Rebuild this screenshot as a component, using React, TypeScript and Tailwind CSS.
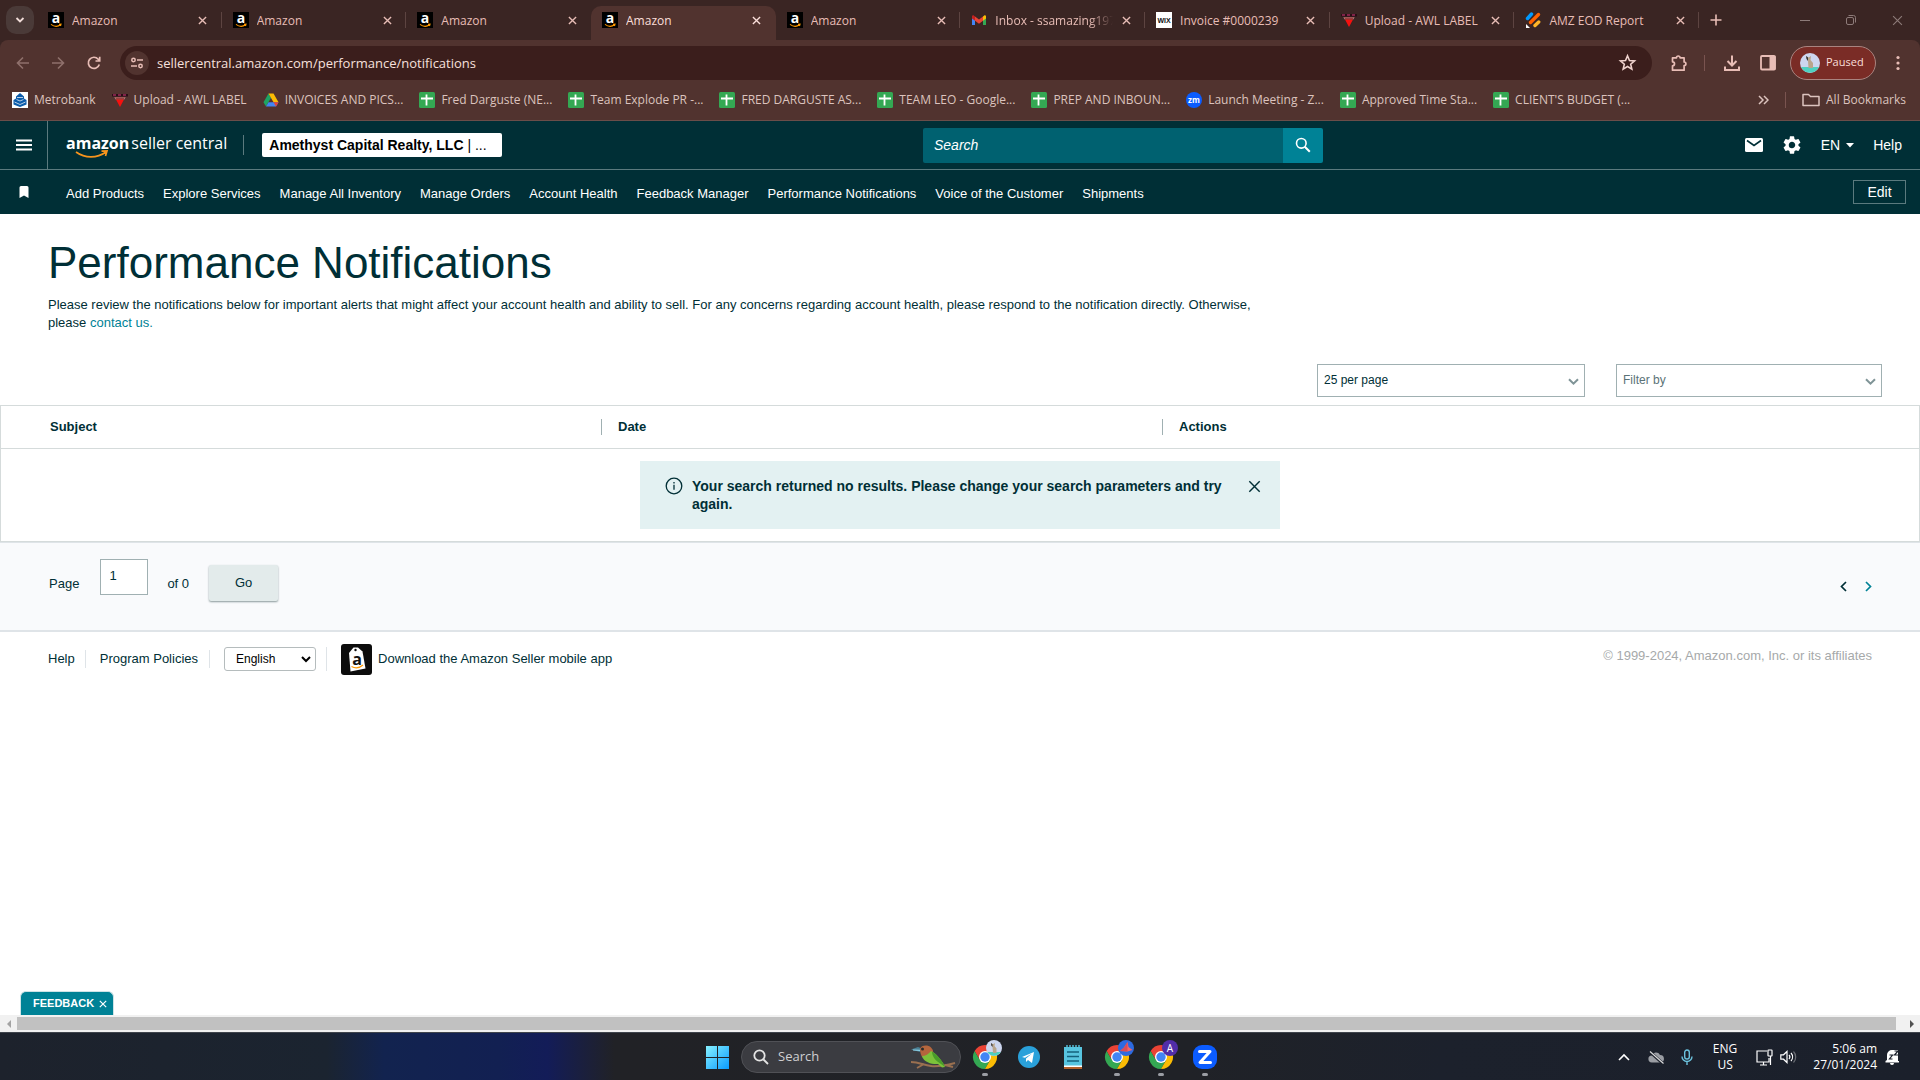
import React, { type ReactNode } from "react";

const CHROME_FONT = "font-['Open_Sans',sans-serif]";

type Kind = "amazon" | "gmail" | "wix" | "awl" | "eod" | "metro" | "drive" | "sheet" | "zoom";

function Favicon({ kind }: { kind: Kind }) {
  const cls = "size-4 shrink-0";
  switch (kind) {
    case "amazon":
      return (
        <svg viewBox="0 0 16 16" className={cls} aria-hidden="true">
          <rect width="16" height="16" fill="#000" />
          <text x="8" y="10.5" textAnchor="middle" fontSize="14" fontWeight="700" fontFamily="Open Sans, sans-serif" fill="#fff">a</text>
          <path d="M3 12.4c3 2.3 7 2.3 9.6.4M11 12.3l2-.1-.5 1.8" fill="none" stroke="#f90" strokeWidth="1.1" />
        </svg>
      );
    case "gmail":
      return (
        <svg viewBox="0 0 16 16" className={cls} aria-hidden="true">
          <path d="M1 4v9h3V6.500z" fill="#4285f4" />
          <path d="M15 4v9h-3V6.500z" fill="#34a853" />
          <path d="M12 4.500L13.500 3.200Q15 3 15 4.500V6.500L12 8.700z" fill="#fbbc04" />
          <path d="M1 6.500V4.500Q1 3 2.500 3.200L4 4.500V8.700z" fill="#c5221f" />
          <path d="M4 4.500L8 7.500l4-3v4.200l-4 3-4-3z" fill="#ea4335" />
        </svg>
      );
    case "wix":
      return (
        <svg viewBox="0 0 16 16" className={cls} aria-hidden="true">
          <rect width="16" height="16" fill="#fff" />
          <text x="8" y="10.500" textAnchor="middle" fontSize="7" fontWeight="700" fontFamily="Liberation Sans, sans-serif" fill="#111">WIX</text>
        </svg>
      );
    case "awl":
      return (
        <svg viewBox="0 0 16 16" className={cls} aria-hidden="true">
          <rect x="0" y="2" width="16" height="2.500" fill="#2a0d16" />
          <path d="M1 3h3M6 3h3M11 3h3" stroke="#d63a7a" strokeWidth="1" />
          <path d="M2.500 5.300h11l-1 2h-9z" fill="#e8b9b9" />
          <path d="M3 5.500h10l-.7 1.200H3.700z" fill="#7a1a1a" />
          <path d="M4 7.500h8L8 15z" fill="#f5110f" />
        </svg>
      );
    case "eod":
      return (
        <svg viewBox="0 0 16 16" className={cls} aria-hidden="true">
          <g strokeLinecap="round" strokeWidth="3.400">
            <path d="M2.500 6.500l4-4.500" stroke="#0099ff" />
            <path d="M5.500 10.500l8-8" stroke="#ff6100" />
            <path d="M10 13.500l3.700-3.500" stroke="#ffb629" />
          </g>
          <path d="M1 12v4h4z" fill="#fff" />
        </svg>
      );
    case "metro":
      return (
        <svg viewBox="0 0 16 16" className={cls} aria-hidden="true">
          <rect width="16" height="16" fill="#fff" />
          <path d="M8 1l4 3.500v2L14.500 8v4.500L8 15l-6.500-2.500V8L4 6.500v-2z" fill="#0b5cab" />
          <path d="M5 5.500h6M4.500 7.500L8 9l3.500-1.500M2.500 10L8 12.500l5.500-2.500" fill="none" stroke="#fff" strokeWidth=".7" />
        </svg>
      );
    case "drive":
      return (
        <svg viewBox="0 0 16 16" className={cls} aria-hidden="true">
          <path d="M5.500 1.500L8 5.800 3 14.500.5 10.200z" fill="#1ea362" />
          <path d="M5.500 1.500h5l5 8.700h-5z" fill="#fbbc04" />
          <path d="M5.500 10.200h10L13 14.500H3z" fill="#4285f4" />
          <path d="M15.500 10.200L13 14.500l-2.500-4.300z" fill="#ea4335" />
        </svg>
      );
    case "sheet":
      return (
        <svg viewBox="0 0 16 16" className={cls} aria-hidden="true">
          <rect width="16" height="16" rx="1.500" fill="#34a853" />
          <path d="M2 6.500h12M7.500 2.500v11" stroke="#fff" strokeWidth="1.800" />
        </svg>
      );
    case "zoom":
      return (
        <svg viewBox="0 0 16 16" className={cls} aria-hidden="true">
          <circle cx="8" cy="8" r="8" fill="#0b5cff" />
          <text x="8" y="10.500" textAnchor="middle" fontSize="8" fontWeight="700" fontFamily="Open Sans, sans-serif" fill="#fff">zm</text>
        </svg>
      );
  }
}

const tabs: { kind: Kind; title: string; active?: boolean; noLine?: boolean }[] = [
  { kind: "amazon", title: "Amazon" },
  { kind: "amazon", title: "Amazon" },
  { kind: "amazon", title: "Amazon", noLine: true },
  { kind: "amazon", title: "Amazon", active: true, noLine: true },
  { kind: "amazon", title: "Amazon" },
  { kind: "gmail", title: "Inbox - ssamazing197" },
  { kind: "wix", title: "Invoice #0000239" },
  { kind: "awl", title: "Upload - AWL LABEL" },
  { kind: "eod", title: "AMZ EOD Report" },
];

const bookmarks: { kind: Kind; title: string }[] = [
  { kind: "metro", title: "Metrobank" },
  { kind: "awl", title: "Upload - AWL LABEL" },
  { kind: "drive", title: "INVOICES AND PICS..." },
  { kind: "sheet", title: "Fred Darguste (NE..." },
  { kind: "sheet", title: "Team Explode PR -..." },
  { kind: "sheet", title: "FRED DARGUSTE AS..." },
  { kind: "sheet", title: "TEAM LEO - Google..." },
  { kind: "sheet", title: "PREP AND INBOUN..." },
  { kind: "zoom", title: "Launch Meeting - Z..." },
  { kind: "sheet", title: "Approved Time Sta..." },
  { kind: "sheet", title: "CLIENT'S BUDGET (..." },
];

function Cross({ className, width = 1.5 }: { className: string; width?: number }) {
  return (
    <svg viewBox="0 0 10 10" className={className} fill="none" stroke="currentColor" strokeWidth={width} aria-hidden="true">
      <path d="M1 1l8 8M9 1l-8 8" />
    </svg>
  );
}

function TabStrip() {
  return (
    <div className="flex h-10 items-stretch bg-[#3a2523] text-[#e8bdb6]">
      <div className="flex w-[37px] shrink-0 items-center pl-[6px]">
        <button type="button" aria-label="Search tabs" className="flex h-7 w-7 items-center justify-center rounded-[10px] bg-[#4a3a38] text-[#f0dcd8]">
          <svg viewBox="0 0 10 10" className="size-[10px]" fill="none" stroke="currentColor" strokeWidth="1.800" aria-hidden="true">
            <path d="M1.500 3L5 6.500 8.500 3" />
          </svg>
        </button>
      </div>
      <div role="tablist" className="flex min-w-0 flex-1">
        {tabs.map((t, i) => (
          <div
            key={i}
            role="tab"
            aria-selected={!!t.active}
            className={
              "relative flex min-w-0 flex-1 items-center pl-[11px] pr-[14px] " +
              (t.active ? "mt-[6px] rounded-t-[10px] bg-[#51332f] pb-[6px] text-[#fbdfda]" : "")
            }
          >
            <Favicon kind={t.kind} />
            <span
              className={
                "ml-2 min-w-0 flex-1 overflow-hidden whitespace-nowrap pt-px text-[12px] leading-4 " +
                (t.kind === "gmail" ? "[mask-image:linear-gradient(90deg,#000_80%,transparent)]" : "")
              }
            >
              {t.title}
            </span>
            <button type="button" aria-label="Close tab" className="ml-2 flex size-[10px] shrink-0 items-center justify-center">
              <Cross className="size-[9px]" />
            </button>
            {!t.noLine && <span className="absolute right-0 top-3 h-4 w-px bg-[#5d4441]" />}
          </div>
        ))}
      </div>
      <div className="flex w-[221px] shrink-0 items-center pl-[11px]">
        <button type="button" aria-label="New tab" className="flex size-3 items-center justify-center">
          <svg viewBox="0 0 12 12" className="size-3" stroke="currentColor" strokeWidth="1.600" aria-hidden="true">
            <path d="M6 .5v11M.5 6h11" />
          </svg>
        </button>
        <div className="ml-auto flex items-center gap-9 pr-[17px] text-[#8d7b79]">
          <button type="button" aria-label="Minimize" className="flex h-3 w-[10px] items-center">
            <span className="h-px w-full bg-current" />
          </button>
          <button type="button" aria-label="Restore">
            <svg viewBox="0 0 10 10" className="size-[10px]" fill="none" stroke="currentColor" aria-hidden="true">
              <rect x=".5" y="2.500" width="7" height="7" rx="1.500" />
              <path d="M2.500.5h5a2 2 0 0 1 2 2v5" />
            </svg>
          </button>
          <button type="button" aria-label="Close">
            <Cross className="size-[11px]" width={1} />
          </button>
        </div>
      </div>
    </div>
  );
}

function Toolbar() {
  return (
    <div className="bg-[#3a2523]">
      <div className="flex h-[45px] items-center rounded-t-lg bg-[#51332f] pl-4 text-[#e8bdb6]">
        <button type="button" aria-label="Back" className="text-[#8f706c]">
          <svg viewBox="0 0 14 14" className="size-[14px]" fill="none" stroke="currentColor" strokeWidth="1.600" aria-hidden="true">
            <path d="M13 7H1.500M7 1.500L1.500 7 7 12.500" />
          </svg>
        </button>
        <button type="button" aria-label="Forward" className="ml-[21px] text-[#8f706c]">
          <svg viewBox="0 0 14 14" className="size-[14px]" fill="none" stroke="currentColor" strokeWidth="1.600" aria-hidden="true">
            <path d="M1 7h11.500M7 1.500L12.500 7 7 12.500" />
          </svg>
        </button>
        <button type="button" aria-label="Reload" className="ml-[22px]">
          <svg viewBox="0 0 14 14" className="size-[14px]" fill="none" stroke="currentColor" strokeWidth="1.700" aria-hidden="true">
            <path d="M12.300 8.500A5.600 5.600 0 1 1 11.200 3.200L12.500 4.700M12.700 .8V5H8.500" />
          </svg>
        </button>
        <div className="ml-[19px] flex h-[34px] min-w-0 flex-1 items-center rounded-full bg-[#3b1e1c] pl-[5px] pr-[15px]">
          <button type="button" aria-label="Site information" className="flex size-6 shrink-0 items-center justify-center rounded-full bg-[#51332f]">
            <svg viewBox="0 0 14 14" className="size-[14px]" fill="none" stroke="currentColor" strokeWidth="1.500" aria-hidden="true">
              <circle cx="3.500" cy="4" r="1.700" />
              <path d="M7 4h6M1 10h6" />
              <circle cx="10.500" cy="10" r="1.700" />
            </svg>
          </button>
          <label htmlFor="url" className="sr-only">Address</label>
          <input
            id="url"
            type="text"
            defaultValue="sellercentral.amazon.com/performance/notifications"
            className="ml-2 min-w-0 flex-1 bg-transparent text-[13px] leading-5 text-[#f7e0dc] outline-none"
          />
          <button type="button" aria-label="Bookmark this tab" className="text-[#f0d3ce]">
            <svg viewBox="0 0 24 24" className="size-[19px]" fill="none" stroke="currentColor" strokeWidth="2" aria-hidden="true">
              <path d="M12 3.500l2.500 5.900 6.400.5-4.900 4.200 1.500 6.300L12 17l-5.500 3.400L8 14.100 3.100 9.900l6.400-.5z" />
            </svg>
          </button>
        </div>
        <div className="ml-[18px] flex shrink-0 items-center pr-5">
          <button type="button" aria-label="Extensions">
            <svg viewBox="0 0 18 18" className="size-[18px]" fill="none" stroke="currentColor" strokeWidth="1.700" strokeLinejoin="round" aria-hidden="true">
              <path d="M2.500 3.800h4a1.800 1.800 0 0 1 3.600 0h4v4.200a1.800 1.800 0 0 1 0 3.600v4.600H2.500v-4.400a2 2 0 0 0 0-4z" />
            </svg>
          </button>
          <span className="ml-4 h-4 w-px bg-[#7a5450]" />
          <button type="button" aria-label="Downloads" className="ml-[18px]">
            <svg viewBox="0 0 18 18" className="size-[18px]" fill="none" stroke="currentColor" strokeWidth="2" aria-hidden="true">
              <path d="M9 1.500v9.500M4.500 7L9 11.500 13.500 7M2 12.500v3.500h14v-3.500" />
            </svg>
          </button>
          <button type="button" aria-label="Side panel" className="ml-[18px]">
            <svg viewBox="0 0 18 18" className="size-[18px]" aria-hidden="true">
              <rect x="2" y="2" width="14" height="13.500" rx="1" fill="none" stroke="currentColor" strokeWidth="1.800" />
              <rect x="10.500" y="2" width="6" height="13.500" fill="currentColor" />
            </svg>
          </button>
          <button type="button" className="ml-[13px] flex h-[34px] w-[86px] items-center rounded-full border border-[#a98480] bg-[#7a2c26] pl-[9px] text-[11px] text-[#fbdfda]">
            <svg viewBox="0 0 20 20" className="size-5" aria-hidden="true">
              <circle cx="10" cy="10" r="10" fill="#cdd6ef" />
              <path d="M1 14h18a10 10 0 0 1-18 0z" fill="#4fd0c0" />
              <path d="M6 3l2.500 1.500L11 3l-.5 4 2.500 3v5H8.500L8 8z" fill="#b9a58b" />
              <path d="M6 3l2 1.500V8L6.500 6z" fill="#333" />
            </svg>
            <span className="ml-[6px]">Paused</span>
          </button>
          <button type="button" aria-label="Menu" className="ml-5">
            <svg viewBox="0 0 4 16" className="h-4 w-1" fill="currentColor" aria-hidden="true">
              <circle cx="2" cy="2.500" r="1.600" />
              <circle cx="2" cy="8" r="1.600" />
              <circle cx="2" cy="13.500" r="1.600" />
            </svg>
          </button>
        </div>
      </div>
      <div className="flex h-9 items-center border-b border-[#6a4d49] bg-[#51332f] pb-[5px] pl-3 pr-[14px] text-[12px] text-[#dcc3be]">
        <nav aria-label="Bookmarks" className="flex min-w-0 items-center gap-4">
          {bookmarks.map((b) => (
            <a key={b.title} href="#" className="flex items-center gap-[6px] whitespace-nowrap">
              <Favicon kind={b.kind} />
              {b.title}
            </a>
          ))}
        </nav>
        <div className="ml-auto flex shrink-0 items-center">
          <button type="button" aria-label="More bookmarks">
            <svg viewBox="0 0 11 10" className="h-[10px] w-[11px]" fill="none" stroke="currentColor" strokeWidth="1.500" aria-hidden="true">
              <path d="M1 1l4 4-4 4M6 1l4 4-4 4" />
            </svg>
          </button>
          <span className="ml-4 h-4 w-px bg-[#7a5450]" />
          <a href="#" className="ml-4 flex items-center gap-[6px] whitespace-nowrap">
            <svg viewBox="0 0 18 14" className="h-[14px] w-[18px]" fill="none" stroke="currentColor" strokeWidth="1.500" strokeLinejoin="round" aria-hidden="true">
              <path d="M1 12.500v-11h5.500l2 2H17v9z" />
            </svg>
            All Bookmarks
          </a>
        </div>
      </div>
    </div>
  );
}

const navItems = [
  "Add Products",
  "Explore Services",
  "Manage All Inventory",
  "Manage Orders",
  "Account Health",
  "Feedback Manager",
  "Performance Notifications",
  "Voice of the Customer",
  "Shipments",
];

function SiteHeader() {
  return (
    <header className="bg-[#002f36] text-white">
      <div className="grid h-[49px] grid-cols-[923fr_400px_597fr] items-center border-b border-[#5b7a7e]">
        <div className="flex h-full items-center">
          <button type="button" aria-label="Open menu" className="flex h-full w-12 items-center justify-center border-r border-[#5b7a7e]">
            <svg viewBox="0 0 16 12" className="h-3 w-4" stroke="currentColor" strokeWidth="2" aria-hidden="true">
              <path d="M0 1.500h16M0 6h16M0 10.500h16" />
            </svg>
          </button>
          <a href="#" aria-label="amazon seller central" className="relative ml-[18px] flex h-7 items-start gap-[2px] whitespace-nowrap pt-[2px] font-['Open_Sans',sans-serif] text-[16px] leading-5">
            <span className="font-bold">amazon</span>
            <span>seller central</span>
            <svg viewBox="0 0 34 9" className="absolute left-[9px] top-[19px] h-[9px] w-[34px]" fill="none" stroke="#f7941d" strokeWidth="1.700" aria-hidden="true">
              <path d="M1 2c9 6.500 21 6.500 30 0M26.500 1.200l5.500-.2-1.500 5" />
            </svg>
          </a>
          <span className="ml-4 h-5 w-px bg-[#5b7a7e]" />
          <button type="button" className="ml-[18px] h-6 w-60 truncate rounded-[2px] bg-white pl-[7px] text-left text-[14px] leading-6 text-black">
            <b>Amethyst Capital Realty, LLC</b> | ...
          </button>
        </div>
        <form className="flex h-[35px]" onSubmit={(e) => e.preventDefault()}>
          <label htmlFor="site-search" className="sr-only">Search</label>
          <input
            id="site-search"
            type="text"
            placeholder="Search"
            className="min-w-0 flex-1 rounded-l-[2px] bg-[#006170] px-[11px] text-[14px] italic text-white outline-none placeholder:text-white"
          />
          <button type="submit" aria-label="Search" className="flex w-10 items-center justify-center rounded-r-[2px] bg-[#008296]">
            <svg viewBox="0 0 16 16" className="size-4" fill="none" stroke="currentColor" strokeWidth="1.600" aria-hidden="true">
              <circle cx="6.300" cy="6.300" r="4.800" />
              <path d="M9.800 9.800l5 5" strokeWidth="2" />
            </svg>
          </button>
        </form>
        <div className="flex items-center justify-end pr-[18px] text-[14px]">
          <button type="button" aria-label="Mail">
            <svg viewBox="0 0 18 14" className="h-[14px] w-[18px]" aria-hidden="true">
              <rect width="18" height="14" rx="1.500" fill="#fff" />
              <path d="M2 2.500l7 5 7-5" fill="none" stroke="#002f36" strokeWidth="1.600" />
            </svg>
          </button>
          <button type="button" aria-label="Settings" className="ml-5">
            <svg viewBox="2 2 20 20" className="size-[18px]" fill="#fff" aria-hidden="true">
              <path d="M19.140 12.940c.04-.3.060-.610.060-.940 0-.32-.020-.640-.070-.940l2.030-1.580a.49.49 0 0 0 .12-.61l-1.920-3.320a.488.488 0 0 0-.59-.22l-2.390.96c-.5-.38-1.030-.7-1.620-.940l-.36-2.540a.484.484 0 0 0-.48-.41h-3.840c-.24 0-.43.17-.47.41l-.36 2.540c-.59.24-1.130.57-1.620.94l-2.390-.96c-.22-.08-.47 0-.59.22L2.740 8.870c-.12.21-.08.47.12.61l2.030 1.580c-.05.3-.09.63-.09.940s.02.640.07.940l-2.030 1.580a.49.49 0 0 0-.12.61l1.920 3.320c.12.22.37.29.59.22l2.390-.96c.5.38 1.030.7 1.620.94l.36 2.540c.05.24.24.41.48.41h3.840c.24 0 .44-.17.47-.41l.36-2.540c.59-.24 1.130-.56 1.620-.94l2.390.96c.22.08.47 0 .59-.22l1.920-3.320c.12-.22.07-.47-.12-.61l-2.010-1.580zM12 15.600A3.610 3.610 0 0 1 8.400 12c0-1.980 1.620-3.600 3.600-3.600s3.600 1.620 3.600 3.600-1.620 3.600-3.600 3.600z" />
            </svg>
          </button>
          <button type="button" className="ml-5 flex items-center gap-[6px]">
            EN
            <svg viewBox="0 0 8 5" className="h-[5px] w-2" fill="currentColor" aria-hidden="true">
              <path d="M0 0h8L4 4.500z" />
            </svg>
          </button>
          <a href="#" className="ml-[19px]">Help</a>
        </div>
      </div>
      <div className="flex h-11 items-center pr-[14px] text-[13px]">
        <button type="button" aria-label="Bookmarked pages" className="flex w-12 justify-center">
          <svg viewBox="0 0 10 12" className="h-3 w-[10px]" fill="currentColor" aria-hidden="true">
            <path d="M.5 1.500Q.5 0 2 0h6q1.500 0 1.500 1.500V12L5 9.500.5 12z" />
          </svg>
        </button>
        <nav aria-label="Favorites" className="ml-[18px] flex gap-[19px] whitespace-nowrap pt-[3px]">
          {navItems.map((n) => (
            <a key={n} href="#">{n}</a>
          ))}
        </nav>
        <button type="button" className="ml-auto h-6 w-[53px] border border-[#5b7a7e] text-[14px] leading-5">Edit</button>
      </div>
    </header>
  );
}

function FilterSelect({ id, label, width, tone, children }: { id: string; label: string; width: string; tone: string; children: ReactNode }) {
  return (
    <div className={"relative " + width}>
      <label htmlFor={id} className="sr-only">{label}</label>
      <select id={id} className={"h-[33px] w-full appearance-none border border-[#a0b0b2] bg-white pb-[2px] pl-[6px] text-[12px] outline-none " + tone}>
        {children}
      </select>
      <svg viewBox="0 0 11 8" className="pointer-events-none absolute right-[6px] top-[14px] h-2 w-[11px]" fill="none" stroke="#7f9497" strokeWidth="2" aria-hidden="true">
        <path d="M1 1.200l4.500 4.500L10 1.200" />
      </svg>
    </div>
  );
}

function Content() {
  return (
    <main className="flex flex-1 flex-col bg-white text-[13px] text-[#002f36]">
      <div className="px-12 pt-6">
        <h1 className="text-[44px] leading-[50px]">Performance Notifications</h1>
        <p className="mt-2 max-w-[1220px] leading-[18px]">
          Please review the notifications below for important alerts that might affect your account health and ability to sell. For any concerns regarding account health, please respond to the notification directly. Otherwise, please{" "}
          <a href="#" className="text-[#008296]">contact us.</a>
        </p>
      </div>
      <div className="mt-8 flex justify-end gap-[31px] pr-[38px]">
        <FilterSelect id="per-page" label="Results per page" width="w-[268px]" tone="text-[#002f36]">
          <option>25 per page</option>
        </FilterSelect>
        <FilterSelect id="filter-by" label="Filter by" width="w-[266px]" tone="text-[#5b7377]">
          <option>Filter by</option>
        </FilterSelect>
      </div>
      <div className="mt-2 border border-[#d5dbdb]">
        <table className="w-full table-fixed border-collapse text-left">
          <thead>
            <tr className="h-[42px] border-b border-[#d5dbdb]">
              <th scope="col" className="w-[600px] font-bold">
                <span className="block pl-[49px] leading-4">Subject</span>
              </th>
              <th scope="col" className="w-[561px] font-bold">
                <span className="block border-l border-[#a0b0b2] pl-4 leading-4">Date</span>
              </th>
              <th scope="col" className="font-bold">
                <span className="block border-l border-[#a0b0b2] pl-4 leading-4">Actions</span>
              </th>
            </tr>
          </thead>
          <tbody>
            <tr>
              <td colSpan={3} className="py-3">
                <div role="status" className="mx-auto flex min-h-[68px] w-[640px] items-start bg-[#e3f1f2] py-4 pl-[25px] pr-[19px] text-[14px] font-bold leading-[18px]">
                  <svg viewBox="0 0 18 18" className="size-[18px] shrink-0" fill="none" stroke="currentColor" strokeWidth="1.300" aria-hidden="true">
                    <circle cx="9" cy="9" r="7.800" />
                    <path d="M9 7.800v5M9 5v1.500" />
                  </svg>
                  <p className="ml-[9px] flex-1">Your search returned no results. Please change your search parameters and try again.</p>
                  <button type="button" aria-label="Dismiss" className="ml-3 mt-[3px]">
                    <Cross className="size-[13px]" width={1.1} />
                  </button>
                </div>
              </td>
            </tr>
          </tbody>
        </table>
      </div>
      <div className="flex h-[90px] items-start border-b-2 border-t border-[#dfe4e8] bg-[#f9fafc] pl-[49px] pr-12">
        <label htmlFor="page-number" className="pt-[31px]">Page</label>
        <input id="page-number" type="text" defaultValue="1" className="ml-[21px] mt-4 h-9 w-12 border border-[#a0b0b2] bg-white pb-[2px] pl-2 outline-none" />
        <span className="ml-[19px] pt-[31px]">of 0</span>
        <button type="button" className="ml-5 mt-[22px] h-9 w-[69px] rounded-[2px] bg-[#e3ebeb] shadow-[0_1px_2px_#8a999b]">Go</button>
        <div className="ml-auto flex gap-[18px] pt-[38px]">
          <button type="button" aria-label="Previous page">
            <svg viewBox="0 0 7 11" className="h-[11px] w-[7px]" fill="none" stroke="#002f36" strokeWidth="1.700" aria-hidden="true">
              <path d="M6 1L1.500 5.500 6 10" />
            </svg>
          </button>
          <button type="button" aria-label="Next page">
            <svg viewBox="0 0 7 11" className="h-[11px] w-[7px]" fill="none" stroke="#008296" strokeWidth="1.700" aria-hidden="true">
              <path d="M1 1l4.500 4.500L1 10" />
            </svg>
          </button>
        </div>
      </div>
      <footer className="flex items-center pl-12 pr-12 pt-3">
        <a href="#">Help</a>
        <span className="ml-[10px] h-[18px] w-px bg-[#dfe4e8]" />
        <a href="#" className="ml-[14px]">Program Policies</a>
        <span className="ml-[11px] h-[18px] w-px bg-[#dfe4e8]" />
        <div className="relative ml-[14px]">
          <label htmlFor="language" className="sr-only">Language</label>
          <select id="language" className="h-6 w-[92px] appearance-none rounded-[3px] border border-[#b5bcbd] bg-white pl-[11px] text-[12px] text-black outline-none">
            <option>English</option>
          </select>
          <svg viewBox="0 0 10 7" className="pointer-events-none absolute right-[5px] top-[9px] h-[7px] w-[10px]" fill="none" stroke="#000" strokeWidth="2" aria-hidden="true">
            <path d="M1 1l4 4 4-4" />
          </svg>
        </div>
        <span className="ml-[10px] h-6 w-px bg-[#dfe4e8]" />
        <a href="#" className="ml-[14px] flex items-center gap-[6px]">
          <svg viewBox="0 0 31 31" className="size-[31px]" aria-hidden="true">
            <rect width="31" height="31" rx="3" fill="#0c0c0c" />
            <path d="M8 9l4.500-5.500h4.500L21.500 7.500 24.500 24.500 9.500 27.500z" fill="#fff" />
            <circle cx="14.500" cy="6" r="1.200" fill="#0c0c0c" />
            <text x="16" y="20.500" textAnchor="middle" fontSize="16" fontWeight="700" fontFamily="Open Sans, sans-serif" fill="#111">a</text>
            <path d="M10.500 22.500c4 2.200 8 1.500 11.500-1.500" fill="none" stroke="#f90" strokeWidth="1.300" />
          </svg>
          Download the Amazon Seller mobile app
        </a>
        <span className="ml-auto pb-[6px] text-[#a6a9aa]">© 1999-2024, Amazon.com, Inc. or its affiliates</span>
      </footer>
      <div className="mt-auto pl-[20px]">
        <button type="button" className="flex h-6 w-[94px] items-center gap-[5px] rounded-t-[6px] border border-b-0 border-[#cfe3e6] bg-[#008296] pl-3 text-[11px] font-bold text-white">
          FEEDBACK
          <Cross className="size-2" />
        </button>
      </div>
    </main>
  );
}

function ScrollBar() {
  return (
    <div className="flex h-[17px] items-center bg-[#f1f1f1]">
      <button type="button" aria-label="Scroll left" className="flex w-[17px] justify-center">
        <svg viewBox="0 0 4 8" className="h-2 w-1" fill="#a3a3a3" aria-hidden="true"><path d="M4 0v8L0 4z" /></svg>
      </button>
      <div className="h-[13px] flex-1 bg-[#c1c1c1]" />
      <button type="button" aria-label="Scroll right" className="flex w-6 justify-center pl-[7px]">
        <svg viewBox="0 0 4 8" className="h-2 w-1" fill="#505050" aria-hidden="true"><path d="M0 0v8l4-4z" /></svg>
      </button>
    </div>
  );
}

function ChromeIcon({ badge }: { badge: "photo" | "origami" | "letter" }) {
  return (
    <svg viewBox="0 0 34 34" className="size-[34px] shrink-0" aria-hidden="true">
      <g transform="translate(5 5)">
        <path d="M12 12V6H22.400A12 12 0 0 0 1.600 6L6.800 15z" fill="#ea4335" />
        <path d="M12 12L6.800 15 1.600 6A12 12 0 0 0 12 24l5.200-9z" fill="#34a853" />
        <path d="M12 12l5.200 3L12 24A12 12 0 0 0 22.400 6H12z" fill="#fbbc04" />
        <circle cx="12" cy="12" r="6" fill="#fff" />
        <circle cx="12" cy="12" r="4.700" fill="#4285f4" />
      </g>
      <g transform="translate(2 0)">
        {badge === "photo" && (
          <g>
            <circle cx="24" cy="8" r="8" fill="#cdd6ef" />
            <path d="M17.200 12h13.600a8 8 0 0 1-13.600 0z" fill="#4fd0c0" />
            <path d="M21 3l2 1.200L25 3l-.5 3 2 2.500V13h-3.500l-.5-6z" fill="#b9a58b" />
            <path d="M21 3l1.500 1.200V7l-1.200-1.500z" fill="#333" />
          </g>
        )}
        {badge === "origami" && (
          <g>
            <circle cx="24" cy="8" r="8" fill="#2d6ae0" />
            <path d="M25.500 2l1 5 4 3-5 1.500L18 11l4-3.500z" fill="#f0676b" />
            <path d="M25.500 2v9.500L18 11l4-3.500z" fill="#d94c58" />
          </g>
        )}
        {badge === "letter" && (
          <g>
            <circle cx="24" cy="8" r="8" fill="#512da8" />
            <text x="24" y="11.500" textAnchor="middle" fontSize="10" fontFamily="Open Sans, sans-serif" fill="#fff">A</text>
          </g>
        )}
      </g>
    </svg>
  );
}

function TaskSlot({ label, running, children }: { label: string; running?: boolean; children: ReactNode }) {
  return (
    <button type="button" aria-label={label} className="relative flex h-12 w-11 items-center justify-center">
      {children}
      {running && <span className="absolute bottom-[5px] h-[3px] w-[6px] rounded-full bg-[#9b9ea4]" />}
    </button>
  );
}

function Taskbar() {
  return (
    <div className="grid h-12 grid-cols-[1fr_536px_1fr] items-center border-t border-[#3f444c] bg-[linear-gradient(90deg,#1d222c_0%,#1b2430_17%,#12234f_20%,#122052_26%,#131c58_28.500%,#212226_32%,#202227_62%,#1c212c_75%,#1b202b_100%)] text-white">
      <span />
      <div className="flex items-center pl-[3px]">
        <TaskSlot label="Start">
          <svg viewBox="0 0 23 23" className="size-[23px]" aria-hidden="true">
            <defs>
              <linearGradient id="win" x1="0" y1="0" x2="1" y2="1">
                <stop offset="0" stopColor="#86f1ff" />
                <stop offset="1" stopColor="#0a9bff" />
              </linearGradient>
            </defs>
            <path d="M0 0h11v11H0zM12 0h11v11H12zM0 12h11v11H0zM12 12h11v11H12z" fill="url(#win)" />
          </svg>
        </TaskSlot>
        <label className="mx-[2px] flex h-8 w-[220px] items-center rounded-full border border-[#505156] bg-[#3b3c41] pl-[11px] pr-1">
          <svg viewBox="0 0 16 16" className="size-4 shrink-0" fill="none" stroke="#e4e4e4" strokeWidth="1.800" aria-hidden="true">
            <circle cx="6.500" cy="6.500" r="5.200" />
            <path d="M10.500 10.500l4.500 4.500" />
          </svg>
          <span className="sr-only">Search</span>
          <input type="text" placeholder="Search" className="ml-[9px] w-[130px] min-w-0 bg-transparent text-[13px] outline-none placeholder:text-[#cfcfd1]" />
          <svg viewBox="0 0 46 24" className="ml-auto h-6 w-[46px] shrink-0" aria-hidden="true">
            <path d="M1 17c8 0 12 3 20 4s16-1 24-3M14 19l-7 4M35 20l8 2" fill="none" stroke="#9a7050" strokeWidth="1.900" />
            <path d="M1 4.500L8 2l4 1.500-2 3.500z" fill="#4b7f93" />
            <path d="M3 5l7 .3" stroke="#8fd2e8" strokeWidth="1.200" />
            <path d="M10 4c1-4 8-4.500 11-1.500 2 2 2.500 4 2 6.500l-6 2-4 2c-2-2-3-6-3-9z" fill="#b5663d" />
            <path d="M12 11c3 0 7-2 9-5 6 3 9 8 12 12l2 4-3 .5-4-3.500c-5 .5-14-1-16-8z" fill="#7cc23a" />
            <path d="M22 6.500c5 3 8 7 11 11.500l2 4-4-3c-5-3-9-7-9-12.500z" fill="#4a9c2a" />
            <circle cx="12.500" cy="4" r="1.500" fill="#2b2b2b" />
          </svg>
        </label>
        <TaskSlot label="Chrome" running><ChromeIcon badge="photo" /></TaskSlot>
        <TaskSlot label="Telegram">
          <svg viewBox="0 0 22 22" className="size-[22px]" aria-hidden="true">
            <circle cx="11" cy="11" r="11" fill="#2aa1da" />
            <path d="M4 11l12-5-2 11-4-3-2 2v-3.500l6-5-7 4.300z" fill="#fff" />
          </svg>
        </TaskSlot>
        <TaskSlot label="Notepad">
          <svg viewBox="0 0 20 24" className="h-6 w-5" aria-hidden="true">
            <path d="M1 2h18v19H1z" fill="#58c5e0" />
            <path d="M1 20.500h18V22H1z" fill="#fff" />
            <path d="M1 22h18v2H1z" fill="#b3602a" />
            <path d="M4 7h12M4 11.500h12M4 16h12" stroke="#14617c" strokeWidth="1.500" />
            <path d="M4 0v3M7 0v3M10 0v3M13 0v3M16 0v3" stroke="#58c5e0" strokeWidth="1.400" />
          </svg>
        </TaskSlot>
        <TaskSlot label="Chrome, second profile" running><ChromeIcon badge="origami" /></TaskSlot>
        <TaskSlot label="Chrome, third profile" running><ChromeIcon badge="letter" /></TaskSlot>
        <TaskSlot label="Zoom" running>
          <svg viewBox="0 0 24 24" className="size-6" aria-hidden="true">
            <rect width="24" height="24" rx="9" fill="#0b5cff" />
            <path d="M6.500 6.500h10.500L7 17.500h10.500" fill="none" stroke="#fff" strokeWidth="3" strokeLinejoin="round" strokeLinecap="round" />
          </svg>
        </TaskSlot>
      </div>
      <div className="flex items-center justify-end pr-5 text-[12px] leading-4">
        <button type="button" aria-label="Show hidden icons">
          <svg viewBox="0 0 12 8" className="h-2 w-3" fill="none" stroke="#fff" strokeWidth="1.600" aria-hidden="true"><path d="M1 7l5-5 5 5" /></svg>
        </button>
        <svg viewBox="0 0 17 13" className="ml-[18px] h-[13px] w-[17px]" aria-hidden="true">
          <path d="M4 11.500a3.500 3.500 0 0 1-.2-7A4.500 4.500 0 0 1 12 4a3.800 3.800 0 0 1 1 7.500z" fill="#9a9da3" />
          <path d="M2 1l13 11.500" stroke="#1b202b" strokeWidth="3" />
          <path d="M2 .5L15.500 12.500" stroke="#ddd" strokeWidth="1.200" />
        </svg>
        <svg viewBox="0 0 12 17" className="ml-4 h-[17px] w-3" fill="none" stroke="#6cc3de" strokeWidth="1.400" aria-hidden="true">
          <rect x="3.700" y="1" width="4.600" height="9" rx="2.300" />
          <path d="M1 7.500a5 5 0 0 0 10 0M6 12.500v3.500" />
        </svg>
        <div className="ml-5 text-center">
          <div>ENG</div>
          <div>US</div>
        </div>
        <svg viewBox="0 0 17 17" className="ml-[19px] size-[17px]" fill="none" stroke="#fff" strokeWidth="1.200" aria-hidden="true">
          <path d="M11 2H1v11h12V9M4 16h7M7.500 13v3M14.500 7v9" />
          <rect x="12" y="1" width="4" height="6" rx=".5" />
        </svg>
        <svg viewBox="0 0 17 14" className="ml-[7px] h-[14px] w-[17px]" fill="none" stroke="#fff" strokeWidth="1.200" aria-hidden="true">
          <path d="M.8 4.800h2.700L7 1.500v11L3.500 9.200H.8z" />
          <path d="M9 5a3 3 0 0 1 0 4M11 3a6 6 0 0 1 0 8" />
          <path d="M13.500 1.500a8 8 0 0 1 0 11" stroke="#6a6d74" />
        </svg>
        <div className="ml-4 text-right">
          <div>5:06 am</div>
          <div>27/01/2024</div>
        </div>
        <svg viewBox="0 0 15 16" className="ml-2 h-4 w-[15px]" aria-hidden="true">
          <path d="M2 6a5 5 0 0 1 5-5h6v11h1v1.500H.5V12L2 11z" fill="#fff" />
          <path d="M5 14h4a2 2 0 0 1-4 0z" fill="#fff" />
          <path d="M4.500 6h3l-3 4h3M9.500 2h3.500l-3.500 4H13" fill="none" stroke="#1b202b" strokeWidth="1.200" />
        </svg>
      </div>
    </div>
  );
}

export default function App() {
  return (
    <div className="flex min-h-screen flex-col bg-white font-['Liberation_Sans',Arial,sans-serif]">
      <div className={CHROME_FONT}>
        <TabStrip />
        <Toolbar />
      </div>
      <SiteHeader />
      <Content />
      <ScrollBar />
      <div className={CHROME_FONT}>
        <Taskbar />
      </div>
    </div>
  );
}
